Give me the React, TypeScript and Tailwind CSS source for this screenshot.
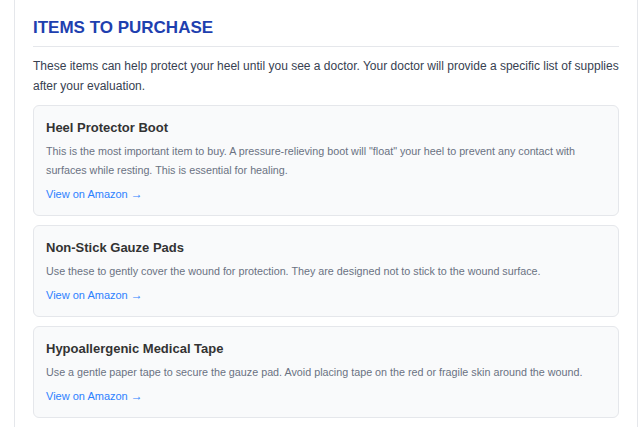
const items = [
  {
    title: "Heel Protector Boot",
    text: 'This is the most important item to buy. A pressure-relieving boot will "float" your heel to prevent any contact with surfaces while resting. This is essential for healing.',
  },
  {
    title: "Non-Stick Gauze Pads",
    text: "Use these to gently cover the wound for protection. They are designed not to stick to the wound surface.",
  },
  {
    title: "Hypoallergenic Medical Tape",
    text: "Use a gentle paper tape to secure the gauze pad. Avoid placing tape on the red or fragile skin around the wound.",
  },
];

export default function App() {
  return (
    <div className="min-h-[427px] bg-white font-['Liberation_Sans',Arial,sans-serif]">
      <section className="ml-[14px] w-[624px] min-h-[427px] border-x border-gray-200 px-[18px] pt-[14px] pb-4">
        <h2 className="text-[17px] leading-7 font-bold text-[#1e40af] pb-1 border-b border-gray-200">
          ITEMS TO PURCHASE
        </h2>
        <p className="mt-[9px] mb-[9px] text-[12px] leading-5 text-[#374151]">
          These items can help protect your heel until you see a doctor. Your doctor will provide a specific list of
          supplies after your evaluation.
        </p>
        <div className="flex flex-col gap-[9px]">
          {items.map((item) => (
            <div key={item.title} className="rounded-md border border-gray-200 bg-gray-50 p-3">
              <h3 className="text-[13px] leading-5 font-semibold text-[#333] mb-1">{item.title}</h3>
              <p className="text-[10.75px] leading-[19px] text-gray-500 mb-1.5">{item.text}</p>
              <a href="#" className="block text-[11px] leading-[17px] text-blue-500">
                View on Amazon <span className="text-[12px]">→</span>
              </a>
            </div>
          ))}
        </div>
      </section>
    </div>
  );
}
